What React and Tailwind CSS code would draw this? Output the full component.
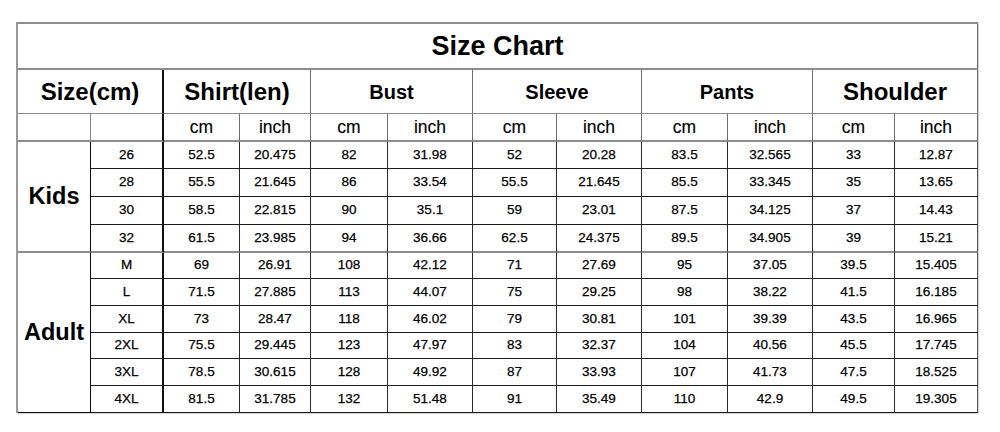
import React from "react";

const kids = [
  ["26", "52.5", "20.475", "82", "31.98", "52", "20.28", "83.5", "32.565", "33", "12.87"],
  ["28", "55.5", "21.645", "86", "33.54", "55.5", "21.645", "85.5", "33.345", "35", "13.65"],
  ["30", "58.5", "22.815", "90", "35.1", "59", "23.01", "87.5", "34.125", "37", "14.43"],
  ["32", "61.5", "23.985", "94", "36.66", "62.5", "24.375", "89.5", "34.905", "39", "15.21"],
];

const adults = [
  ["M", "69", "26.91", "108", "42.12", "71", "27.69", "95", "37.05", "39.5", "15.405"],
  ["L", "71.5", "27.885", "113", "44.07", "75", "29.25", "98", "38.22", "41.5", "16.185"],
  ["XL", "73", "28.47", "118", "46.02", "79", "30.81", "101", "39.39", "43.5", "16.965"],
  ["2XL", "75.5", "29.445", "123", "47.97", "83", "32.37", "104", "40.56", "45.5", "17.745"],
  ["3XL", "78.5", "30.615", "128", "49.92", "87", "33.93", "107", "41.73", "47.5", "18.525"],
  ["4XL", "81.5", "31.785", "132", "51.48", "91", "35.49", "110", "42.9", "49.5", "19.305"],
];

function C({ className = "", children }) {
  return (
    <div className={"flex items-center justify-center " + className}>{children}</div>
  );
}

function DataRow({ row, last }) {
  const bottom = last
    ? "border-b-2 border-b-[#8c8c8c]"
    : "border-b border-b-[#1a1a1a]";
  return (
    <>
      {row.map((v, i) => {
        const right =
          i === 0
            ? "border-r-2 border-r-[#111]"
            : i === 10
            ? "border-r border-r-[#555]"
            : "border-r border-r-[#2a2a2a]";
        return (
          <C
            key={i}
            className={"text-[13.5px] [-webkit-text-stroke:0.25px_#000] " + right + " " + bottom}
          >
            {v}
          </C>
        );
      })}
    </>
  );
}

export default function App() {
  const headerBig = "text-[24px] font-bold";
  const headerSmall = "text-[20px] font-bold";
  const hb = "border-b border-b-[#8c8c8c]";
  const hr = "border-r border-r-[#6e6e6e]";
  return (
    <div
      className="w-[1000px] h-[432px] bg-white text-black overflow-hidden"
      style={{ fontFamily: '"Liberation Sans", Arial, sans-serif' }}
    >
      <div className="ml-[16px] mt-[22px] w-[962px] border-t-2 border-l-2 border-t-[#8c8c8c] border-l-[#9a9a9a] grid grid-cols-[73px_73px_76px_71px_77px_85px_84px_85px_86px_85px_82px_83px] grid-rows-[46px_44px_28px_27px_28px_28px_28px_26px_27px_27px_26px_27px_27px] shadow-[1px_1px_0_#d4d4d4]">
        {/* Title */}
        <C className="col-span-12 text-[27px] font-bold border-b-2 border-b-[#8c8c8c] border-r border-r-[#6e6e6e]">
          Size Chart
        </C>

        {/* Header */}
        <C className={"col-span-2 " + headerBig + " " + hb + " border-r-2 border-r-[#111]"}>Size(cm)</C>
        <C className={"col-span-2 " + headerBig + " " + hb + " " + hr}>Shirt(len)</C>
        <C className={"col-span-2 " + headerSmall + " " + hb + " " + hr}>Bust</C>
        <C className={"col-span-2 " + headerSmall + " " + hb + " " + hr}>Sleeve</C>
        <C className={"col-span-2 " + headerSmall + " " + hb + " " + hr}>Pants</C>
        <C className={"col-span-2 " + headerBig + " " + hb + " " + hr}>Shoulder</C>

        {/* Sub header */}
        <C className="border-b-2 border-b-[#8c8c8c] border-r border-r-[#8c8c8c]" />
        <C className="border-b-2 border-b-[#8c8c8c] border-r-2 border-r-[#111]" />
        {["cm", "inch", "cm", "inch", "cm", "inch", "cm", "inch", "cm", "inch"].map((t, i) => (
          <C
            key={i}
            className={"text-[17.5px] pt-[1px] [-webkit-text-stroke:0.15px_#000] border-b-2 border-b-[#8c8c8c] border-r border-r-[#6e6e6e]"}
          >
            {t}
          </C>
        ))}

        {/* Kids */}
        <C className="row-span-4 col-start-1 row-start-4 text-[23.5px] font-bold border-b-2 border-b-[#8c8c8c] border-r border-r-[#111]">
          Kids
        </C>
        {kids.map((r, i) => (
          <DataRow key={"k" + i} row={r} last={i === kids.length - 1} />
        ))}

        {/* Adult */}
        <C className="row-span-6 col-start-1 row-start-8 text-[23.5px] font-bold border-b border-b-[#111] border-r border-r-[#111]">
          Adult
        </C>
        {adults.map((r, i) => (
          <DataRow key={"a" + i} row={r} last={false} />
        ))}
      </div>
    </div>
  );
}
